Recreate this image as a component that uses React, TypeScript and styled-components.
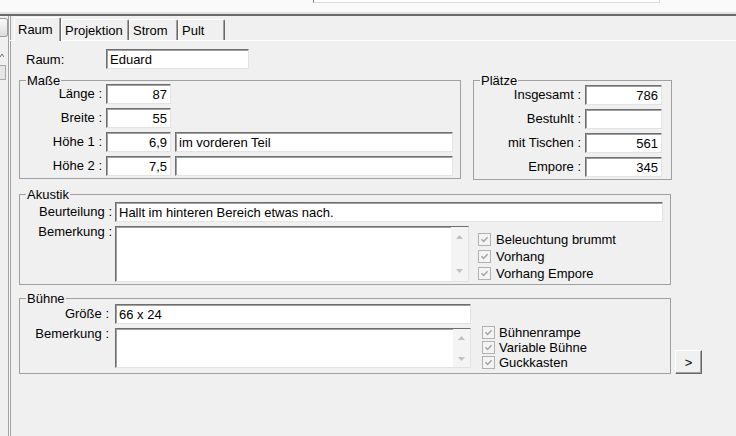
import React from "react";
import styled, { createGlobalStyle } from "styled-components";

const GlobalStyle = createGlobalStyle`
  html, body {
    margin: 0;
    padding: 0;
    background: #f0f0f0;
  }
  body {
    font-family: "Liberation Sans", Arial, sans-serif;
    font-size: 13px;
    color: #000;
  }
`;

const Window = styled.div`
  width: 736px;
  height: 436px;
  overflow: hidden;
  background: #f0f0f0;
  display: flex;
  flex-direction: column;
`;

const TopStrip = styled.div`
  height: 12px;
  flex: none;
  background: #fafafa;
  border-bottom: 2px solid #e3e3e3;
  padding-left: 313px;
`;

const TopField = styled.div`
  box-sizing: border-box;
  width: 347px;
  height: 3px;
  background: #fff;
  border-left: 1px solid #7a7a7a;
  border-right: 1px solid #dcdcdc;
  border-bottom: 1px solid #dcdcdc;
`;

const Divider = styled.div`
  height: 2px;
  flex: none;
  background: #6a6a6a;
`;

const Body = styled.div`
  flex: 1;
  display: flex;
  min-height: 0;
`;

const SideStrip = styled.div`
  width: 8px;
  flex: none;
  border-right: 1px solid #a0a0a0;
  display: flex;
  flex-direction: column;
  padding-top: 2px;
`;

const SideTab = styled.div`
  box-sizing: border-box;
  width: 8px;
  height: 19px;
  border: 1px solid #9c9c9c;
  border-left: none;
  border-radius: 0 3px 3px 0;
  background: linear-gradient(#fafafa, #dcdcdc);
`;

const SideArrow = styled.div`
  height: 6px;
  margin-top: 16px;
  display: flex;
`;

const SideThumb = styled.div`
  box-sizing: border-box;
  width: 6px;
  height: 15px;
  margin-top: 6px;
  border: 1px solid #a8a8a8;
  border-left: none;
  background: #e6e6e6;
`;

const TabArea = styled.div`
  flex: 1;
  display: flex;
  flex-direction: column;
  border-left: 1px solid #fcfcfc;
  box-shadow: inset 1px 0 0 #a0a0a0;
`;

const TabBar = styled.div`
  height: 24px;
  flex: none;
  display: flex;
  align-items: flex-end;
  padding-left: 4px;
`;

const Tab = styled.div<{ $w: number; $active?: boolean }>`
  box-sizing: border-box;
  width: ${(p) => p.$w}px;
  height: ${(p) => (p.$active ? 24 : 21)}px;
  margin-bottom: ${(p) => (p.$active ? -1 : 0)}px;
  padding-left: 3px;
  display: flex;
  align-items: center;
  background: #f0f0f0;
  border-top: 1px solid #fff;
  border-left: 1px solid #fff;
  border-right: 1px solid #696969;
  border-radius: 2px 2px 0 0;
  box-shadow: inset -1px 0 0 #a0a0a0;
  position: relative;
  z-index: ${(p) => (p.$active ? 1 : 0)};
  white-space: nowrap;
`;

const Panel = styled.div`
  flex: 1;
  border-top: 1px solid #fff;
  padding: 8px 0 0 9px;
`;

const RaumRow = styled.div`
  display: flex;
  align-items: center;
  height: 20px;
`;

const RaumLabel = styled.span`
  box-sizing: border-box;
  width: 87px;
  padding-left: 7px;
`;

const Field = styled.input<{ $w: number; $align?: "left" | "right" }>`
  box-sizing: border-box;
  width: ${(p) => p.$w}px;
  height: 20px;
  margin: 0;
  padding: 0 3px;
  font: inherit;
  color: #000;
  background: #fff;
  text-align: ${(p) => p.$align ?? "left"};
  border: 1px solid;
  border-color: #6e6e6e #e3e3e3 #e3e3e3 #6e6e6e;
  box-shadow: inset 1px 1px 0 #a0a0a0;
  outline: none;
`;

const TopGroups = styled.div`
  display: flex;
  align-items: flex-start;
  gap: 12px;
  margin-top: 8px;
`;

const Group = styled.fieldset<{ $w: number; $top?: number }>`
  box-sizing: border-box;
  width: ${(p) => p.$w}px;
  min-width: 0;
  margin: ${(p) => p.$top ?? 0}px 0 0 0;
  padding: 0;
  border: 1px solid #a0a0a0;
`;

const Legend = styled.legend`
  margin-left: 6px;
  padding: 0 1px;
  line-height: 7px;
`;

const FormGrid = styled.div<{ $cols: string; $gap: number; $pad: string }>`
  display: grid;
  grid-template-columns: ${(p) => p.$cols};
  grid-auto-rows: auto;
  column-gap: ${(p) => p.$gap}px;
  row-gap: 4px;
  padding: ${(p) => p.$pad};
  align-items: start;
`;

const Label = styled.span<{ $top?: boolean }>`
  text-align: right;
  white-space: nowrap;
  line-height: ${(p) => (p.$top ? 15 : 20)}px;
  margin-top: ${(p) => (p.$top ? -2 : 0)}px;
`;

const Wide = styled.div`
  grid-column: span 2;
`;

const Memo = styled.div<{ $w: number; $h: number }>`
  box-sizing: border-box;
  width: ${(p) => p.$w}px;
  height: ${(p) => p.$h}px;
  display: flex;
  background: #fff;
  border: 1px solid;
  border-color: #6e6e6e #e3e3e3 #e3e3e3 #6e6e6e;
  box-shadow: inset 1px 1px 0 #a0a0a0;
`;

const MemoText = styled.div`
  flex: 1;
`;

const MemoScroll = styled.div`
  width: 17px;
  flex: none;
  background: #f4f4f4;
  display: flex;
  flex-direction: column;
  justify-content: space-between;
`;

const ScrollButton = styled.div<{ $h: number }>`
  height: ${(p) => p.$h}px;
  display: flex;
  align-items: center;
  justify-content: center;
`;

const CheckList = styled.div<{ $left: number; $top: number }>`
  display: flex;
  flex-direction: column;
  margin-left: ${(p) => p.$left}px;
  margin-top: ${(p) => p.$top}px;
`;

const CheckRow = styled.div<{ $h: number; $gap: number }>`
  height: ${(p) => p.$h}px;
  display: flex;
  align-items: center;
  gap: ${(p) => p.$gap}px;
  white-space: nowrap;
`;

const CheckBox = styled.span`
  box-sizing: border-box;
  width: 13px;
  height: 13px;
  flex: none;
  border: 1px solid #b1b1b1;
  background: #f4f4f4;
  display: inline-flex;
  align-items: center;
  justify-content: center;
`;

const BottomRow = styled.div`
  display: flex;
  align-items: flex-end;
  gap: 4px;
  margin-top: 10px;
`;

const SmallButton = styled.button`
  box-sizing: border-box;
  width: 27px;
  height: 24px;
  margin: 0;
  padding: 0;
  font: inherit;
  color: #000;
  background: #f0f0f0;
  border: 1px solid;
  border-color: #fff #696969 #696969 #fff;
  box-shadow: inset -1px -1px 0 #a0a0a0;
`;

const Arrow = ({ down }: { down?: boolean }) => (
  <svg width="7" height="4" viewBox="0 0 7 4">
    <polygon points={down ? "0,0 7,0 3.5,4" : "0,4 7,4 3.5,0"} fill="#c0c0c0" />
  </svg>
);

const Check = ({ label, h, gap }: { label: string; h: number; gap: number }) => (
  <CheckRow $h={h} $gap={gap}>
    <CheckBox>
      <svg width="9" height="9" viewBox="0 0 9 9">
        <path d="M1.5 4.2 L3.6 6.4 L7.6 2.2" fill="none" stroke="#a4a4a4" strokeWidth="1.5" />
      </svg>
    </CheckBox>
    <span>{label}</span>
  </CheckRow>
);

const MemoBox = ({ w, h, btn }: { w: number; h: number; btn: number }) => (
  <Memo $w={w} $h={h}>
    <MemoText />
    <MemoScroll>
      <ScrollButton $h={btn}>
        <Arrow />
      </ScrollButton>
      <ScrollButton $h={btn}>
        <Arrow down />
      </ScrollButton>
    </MemoScroll>
  </Memo>
);

const App = () => {
  const tabs = [
    { name: "Raum", w: 47 },
    { name: "Projektion", w: 68 },
    { name: "Strom", w: 49 },
    { name: "Pult", w: 47 },
  ];

  return (
    <Window>
      <GlobalStyle />
      <TopStrip>
        <TopField />
      </TopStrip>
      <Divider />
      <Body>
        <SideStrip>
          <SideTab />
          <SideArrow>
            <svg width="4" height="5" viewBox="0 0 4 5">
              <polyline points="0,4 2,1 4,4" fill="none" stroke="#707070" strokeWidth="1" />
            </svg>
          </SideArrow>
          <SideThumb />
        </SideStrip>
        <TabArea>
          <TabBar>
            {tabs.map((t, i) => (
              <Tab key={t.name} $w={t.w} $active={i === 0}>
                {t.name}
              </Tab>
            ))}
          </TabBar>
          <Panel>
            <RaumRow>
              <RaumLabel>Raum:</RaumLabel>
              <Field $w={143} readOnly defaultValue="Eduard" />
            </RaumRow>

            <TopGroups>
              <Group $w={442}>
                <Legend>Maße</Legend>
                <FormGrid $cols="82px 65px 278px" $gap={4} $pad="0 0 2px 0">
                  <Label>Länge :</Label>
                  <Field $w={65} $align="right" readOnly defaultValue="87" />
                  <span />
                  <Label>Breite :</Label>
                  <Field $w={65} $align="right" readOnly defaultValue="55" />
                  <span />
                  <Label>Höhe 1 :</Label>
                  <Field $w={65} $align="right" readOnly defaultValue="6,9" />
                  <Field $w={278} readOnly defaultValue="im vorderen Teil" />
                  <Label>Höhe 2 :</Label>
                  <Field $w={65} $align="right" readOnly defaultValue="7,5" />
                  <Field $w={278} readOnly defaultValue="" />
                </FormGrid>
              </Group>

              <Group $w={199}>
                <Legend>Plätze</Legend>
                <FormGrid $cols="107px 77px" $gap={4} $pad="1px 0 2px 0">
                  <Label>Insgesamt :</Label>
                  <Field $w={77} $align="right" readOnly defaultValue="786" />
                  <Label>Bestuhlt :</Label>
                  <Field $w={77} $align="right" readOnly defaultValue="" />
                  <Label>mit Tischen :</Label>
                  <Field $w={77} $align="right" readOnly defaultValue="561" />
                  <Label>Empore :</Label>
                  <Field $w={77} $align="right" readOnly defaultValue="345" />
                </FormGrid>
              </Group>
            </TopGroups>

            <Group $w={652} $top={11}>
              <Legend>Akustik</Legend>
              <FormGrid $cols="92px 354px auto" $gap={3} $pad="4px 0 2px 0">
                <Label>Beurteilung :</Label>
                <Wide>
                  <Field $w={548} readOnly defaultValue="Hallt im hinteren Bereich etwas nach." />
                </Wide>
                <Label $top>Bemerkung :</Label>
                <MemoBox w={354} h={56} btn={20} />
                <CheckList $left={6} $top={5}>
                  <Check label="Beleuchtung brummt" h={17} gap={5} />
                  <Check label="Vorhang" h={17} gap={5} />
                  <Check label="Vorhang Empore" h={17} gap={5} />
                </CheckList>
              </FormGrid>
            </Group>

            <BottomRow>
              <Group $w={652}>
                <Legend>Bühne</Legend>
                <FormGrid $cols="89px 356px auto" $gap={6} $pad="2px 0 3px 0">
                  <Label>Größe :</Label>
                  <Wide>
                    <Field $w={356} readOnly defaultValue="66 x 24" />
                  </Wide>
                  <Label $top>Bemerkung :</Label>
                  <MemoBox w={356} h={40} btn={17} />
                  <CheckList $left={5} $top={-3}>
                    <Check label="Bühnenrampe" h={15} gap={4} />
                    <Check label="Variable Bühne" h={15} gap={4} />
                    <Check label="Guckkasten" h={15} gap={4} />
                  </CheckList>
                </FormGrid>
              </Group>
              <SmallButton type="button">&gt;</SmallButton>
            </BottomRow>
          </Panel>
        </TabArea>
      </Body>
    </Window>
  );
};

export default App;
